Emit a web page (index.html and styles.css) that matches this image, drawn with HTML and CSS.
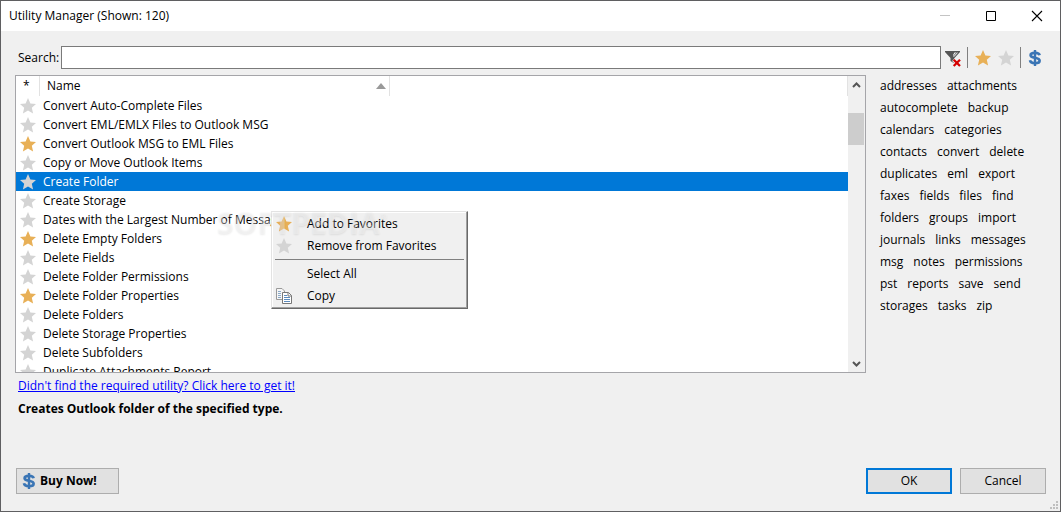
FILE: index.html
```html
<!DOCTYPE html>
<html lang="en">
<head>
<meta charset="utf-8">
<title>Utility Manager</title>
<link rel="stylesheet" href="styles.css">
</head>
<body>
<svg class="sprites" aria-hidden="true">
  <symbol id="star" viewBox="0 0 16 16"><path d="M8 0 10.400 5.400 16 6 11.800 9.700 13.100 15.600 8 12.600 2.900 15.600 4.200 9.700 0 6 5.600 5.400Z" fill="currentColor"/></symbol>
  <symbol id="dollar" viewBox="0 0 14 16"><path d="M11.600 5.300C11.300 3.500 9.600 2.900 7 2.900 4.400 2.900 2.600 3.600 2.600 5.200 2.600 8.800 11.600 6.600 11.600 10.700 11.600 12.400 9.600 13.200 7 13.200 4.100 13.200 2.300 12.300 2 10.300" fill="none" stroke="#3a75b5" stroke-width="2.700"/><path d="M7 0V16" stroke="#3a75b5" stroke-width="2.400"/></symbol>
</svg>
<main class="window">
  <header class="titlebar">
    <h1 class="title">Utility Manager (Shown: 120)</h1>
    <div class="caption">
      <button class="cap" disabled aria-label="Minimize"><svg width="12" height="12"><path d="M1 5.500H11" stroke="#c4c4c4"/></svg></button>
      <button class="cap" aria-label="Maximize"><svg width="12" height="12"><path d="M1.500 1.500H10.500V10.500H1.500Z" fill="none" stroke="#000"/></svg></button>
      <button class="cap" aria-label="Close"><svg width="12" height="12"><path d="M1 1 11 11M11 1 1 11" stroke="#000" stroke-width="1.100"/></svg></button>
    </div>
  </header>

  <div class="search">
    <label for="query">Search:</label>
    <input id="query" class="query" type="text">
    <div class="tools">
      <button class="tool filter" aria-label="Clear filter"><svg width="16" height="18" viewBox="0 0 16 18"><path d="M0 2H15V3L9.500 9V14.500L5.500 12V9L0 3Z" fill="#555"/><path d="M9.500 3.500H13L9.500 7.500H8V6Z" fill="#f0f0f0"/><path d="M12 3 8.500 7" stroke="#777"/><path d="M8.500 10.500 15 17M15 10.500 8.500 17" stroke="#f0f0f0" stroke-width="4"/><path d="M8.700 10.800 15 17M15 10.800 8.700 17" stroke="#d40000" stroke-width="2.300"/></svg></button>
      <span class="bar"></span>
      <button class="tool gold" aria-label="Show favorites"><svg class="star"><use href="#star"/></svg></button>
      <button class="tool grey" aria-label="Show others"><svg class="star"><use href="#star"/></svg></button>
      <span class="bar"></span>
      <button class="tool" aria-label="Buy"><svg class="dollar"><use href="#dollar"/></svg></button>
    </div>
  </div>

  <div class="content">
    <div class="list">
      <div class="rows">
        <table class="table">
          <colgroup><col class="col-star"><col class="col-name"><col></colgroup>
          <thead><tr><th class="mark">*</th><th><span class="sort">Name<svg width="10" height="6"><path d="M5 0 10 6H0Z" fill="#999"/></svg></span></th><th></th></tr></thead>
          <tbody>
            <tr><td><svg class="star"><use href="#star"/></svg></td><td colspan="2">Convert Auto-Complete Files</td></tr>
            <tr><td><svg class="star"><use href="#star"/></svg></td><td colspan="2">Convert EML/EMLX Files to Outlook MSG</td></tr>
            <tr><td><svg class="star gold"><use href="#star"/></svg></td><td colspan="2">Convert Outlook MSG to EML Files</td></tr>
            <tr><td><svg class="star"><use href="#star"/></svg></td><td colspan="2">Copy or Move Outlook Items</td></tr>
            <tr class="selected"><td><svg class="star"><use href="#star"/></svg></td><td colspan="2">Create Folder</td></tr>
            <tr><td><svg class="star"><use href="#star"/></svg></td><td colspan="2">Create Storage</td></tr>
            <tr><td><svg class="star"><use href="#star"/></svg></td><td colspan="2">Dates with the Largest Number of Messages</td></tr>
            <tr><td><svg class="star gold"><use href="#star"/></svg></td><td colspan="2">Delete Empty Folders</td></tr>
            <tr><td><svg class="star"><use href="#star"/></svg></td><td colspan="2">Delete Fields</td></tr>
            <tr><td><svg class="star"><use href="#star"/></svg></td><td colspan="2">Delete Folder Permissions</td></tr>
            <tr><td><svg class="star gold"><use href="#star"/></svg></td><td colspan="2">Delete Folder Properties</td></tr>
            <tr><td><svg class="star"><use href="#star"/></svg></td><td colspan="2">Delete Folders</td></tr>
            <tr><td><svg class="star"><use href="#star"/></svg></td><td colspan="2">Delete Storage Properties</td></tr>
            <tr><td><svg class="star"><use href="#star"/></svg></td><td colspan="2">Delete Subfolders</td></tr>
            <tr><td><svg class="star"><use href="#star"/></svg></td><td colspan="2">Duplicate Attachments Report</td></tr>
          </tbody>
        </table>
      </div>
      <div class="scrollbar">
        <button class="arrow" aria-label="Scroll up"><svg width="9" height="6"><path d="M1 5 4.500 1.500 8 5" fill="none" stroke="#555" stroke-width="2"/></svg></button>
        <div class="track"><div class="thumb"></div></div>
        <button class="arrow" aria-label="Scroll down"><svg width="9" height="6"><path d="M1 1 4.500 4.500 8 1" fill="none" stroke="#555" stroke-width="2"/></svg></button>
      </div>
    </div>
    <nav class="tags">
      <button>addresses</button><button>attachments</button><button>autocomplete</button><button>backup</button><button>calendars</button><button>categories</button><button>contacts</button><button>convert</button><button>delete</button><button>duplicates</button><button>eml</button><button>export</button><button>faxes</button><button>fields</button><button>files</button><button>find</button><button>folders</button><button>groups</button><button>import</button><button>journals</button><button>links</button><button>messages</button><button>msg</button><button>notes</button><button>permissions</button><button>pst</button><button>reports</button><button>save</button><button>send</button><button>storages</button><button>tasks</button><button>zip</button>
    </nav>
  </div>

  <section class="details">
    <a href="#request">Didn't find the required utility? Click here to get it!</a>
    <p>Creates Outlook folder of the specified type.</p>
  </section>

  <footer class="footer">
    <button class="btn buy"><svg class="dollar"><use href="#dollar"/></svg>Buy Now!</button>
    <span class="spacer"></span>
    <button class="btn ok">OK</button>
    <button class="btn">Cancel</button>
  </footer>

  <div class="menu" role="menu">
    <button class="item" role="menuitem"><svg class="star gold"><use href="#star"/></svg>Add to Favorites</button>
    <button class="item" role="menuitem"><svg class="star"><use href="#star"/></svg>Remove from Favorites</button>
    <hr class="rule">
    <button class="item" role="menuitem"><span class="blank"></span>Select All</button>
    <button class="item" role="menuitem"><svg class="copy" viewBox="0 0 16 16"><path d="M0.500 0.500H6L8.500 3V11.500H0.500Z" fill="#f6f6f6" stroke="#999"/><path d="M2 3.500H5M2 5.500H5M2 7.500H5M2 9.500H5" stroke="#8aa9c8"/><path d="M6.500 4.500H12.500L15.500 7.500V15.500H6.500Z" fill="#fff" stroke="#777"/><path d="M12 4.500V8H15.500" fill="none" stroke="#777"/><path d="M8 7.500H11M8 9.500H14M8 11.500H14M8 13.500H14" stroke="#5b8bbd"/></svg>Copy</button>
  </div>
  <div class="watermark">SOFTPEDIA<sup>®</sup></div>
  <svg class="grip" width="8" height="8"><path d="M6 0h2v2H6zM3 3h2v2H3zM6 3h2v2H6zM0 6h2v2H0zM3 6h2v2H3zM6 6h2v2H6z" fill="#bfbfbf"/></svg>
</main>
</body>
</html>
```

FILE: styles.css
```css
* { box-sizing: border-box; }
body { margin: 0; font: 12px/18px "Open Sans", "Noto Sans", sans-serif; color: #000; }
button, input { font: inherit; color: inherit; }
button { border: 0; padding: 0; background: none; }
svg { display: block; flex: none; }
.sprites { position: absolute; width: 0; height: 0; }
.window { position: relative; display: flex; flex-direction: column; height: 100vh; border: 1px solid #5f5f61; background: #f0f0f0; overflow: hidden; }

.titlebar { display: flex; align-items: center; justify-content: space-between; height: 30px; flex: none; background: #fff; padding-left: 8px; }
.title { margin: 0; font-size: 12px; font-weight: 400; }
.caption { display: flex; }
.cap { width: 46px; height: 30px; display: grid; place-items: center; }

.search { display: flex; align-items: center; gap: 4px; padding: 15px 14px 0 17px; }
.search label { width: 39px; white-space: nowrap; }
.query { flex: 1; min-width: 0; height: 23px; border: 1px solid #7a7a7a; background: #fff; padding: 0 4px; outline: 0; }
.tools { display: flex; align-items: center; width: 101px; }
.tool { display: grid; place-items: center; width: 23px; height: 22px; }
.tool.filter { width: 16px; }
.bar { width: 1px; height: 21px; margin: 0 3px 0 6px; background: #808080; }
.tool.grey + .bar { margin: 0 2px 0 3px; }
.star { width: 16px; height: 16px; color: #d4d4d4; }
.tool.gold .star, .star.gold { color: #e8b057; }
.dollar { width: 14px; height: 16px; }

.content { display: flex; flex: 1; min-height: 0; padding: 6px 14px 0; gap: 14px; }
.list { display: flex; flex: 1; min-width: 0; border: 1px solid #a5a5a9; background: #fff; }
.rows { flex: 1; min-width: 0; overflow: hidden; }
.table { width: 100%; border-spacing: 0; table-layout: fixed; text-align: left; }
.col-star { width: 24px; }
.col-name { width: 350px; }
.table th { height: 20px; padding: 0 3px 0 7px; border-right: 1px solid #e2e2e2; font-weight: 400; line-height: 18px; }
.sort { display: flex; align-items: center; justify-content: space-between; }
.table td { height: 19px; padding: 0 3px; line-height: 18px; white-space: nowrap; }
.table td:first-child { padding: 0 4px; }
.selected { background: #0078d7; color: #fff; }
.scrollbar { display: flex; flex-direction: column; width: 17px; background: #f0f0f0; }
.arrow { display: grid; place-items: center; height: 17px; }
.track { flex: 1; padding: 20px 1px 0 0; }
.thumb { height: 32px; background: #cdcdcd; }
.tags { display: flex; flex-wrap: wrap; align-content: flex-start; column-gap: 10px; width: 166px; padding-right: 16px; }
.tags button { height: 22px; }

.details { height: 95px; flex: none; padding: 4px 17px 0; }
.details a { color: #00f; }
.details p { margin: 5px 0 0; font-weight: 700; }
.footer { display: flex; gap: 8px; padding: 0 14px 17px 15px; flex: none; }
.spacer { flex: 1; }
.btn { width: 86px; height: 26px; border: 1px solid #adadad; background: #e1e1e1; }
.ok { border: 2px solid #0078d7; }
.buy { display: flex; align-items: center; gap: 4px; width: 103px; padding-left: 5px; font-weight: 700; }

.menu { position: absolute; left: 270px; top: 210px; width: 197px; padding: 1px 3px; border: 1px solid; border-color: #e3e3e3 #696969 #696969 #e3e3e3; background: #f0f0f0; box-shadow: inset -1px -1px #a0a0a0, inset 1px 1px #fff; }
.item { display: flex; align-items: center; gap: 15px; width: 100%; height: 22px; padding-left: 1px; }
.blank, .copy { width: 16px; height: 16px; }
.rule { height: 1px; margin: 2px 0 3px; border: 0; background: #808080; }
.watermark { position: absolute; left: 216px; top: 205px; font: 700 30px/34px "Open Sans", sans-serif; color: rgba(250, 250, 250, 0.35); text-shadow: 0 1px 2px rgba(0, 0, 0, 0.08); pointer-events: none; }
.watermark sup { font-size: 9px; line-height: 0; vertical-align: 14px; }
.grip { position: absolute; right: 2px; bottom: 2px; }
```
